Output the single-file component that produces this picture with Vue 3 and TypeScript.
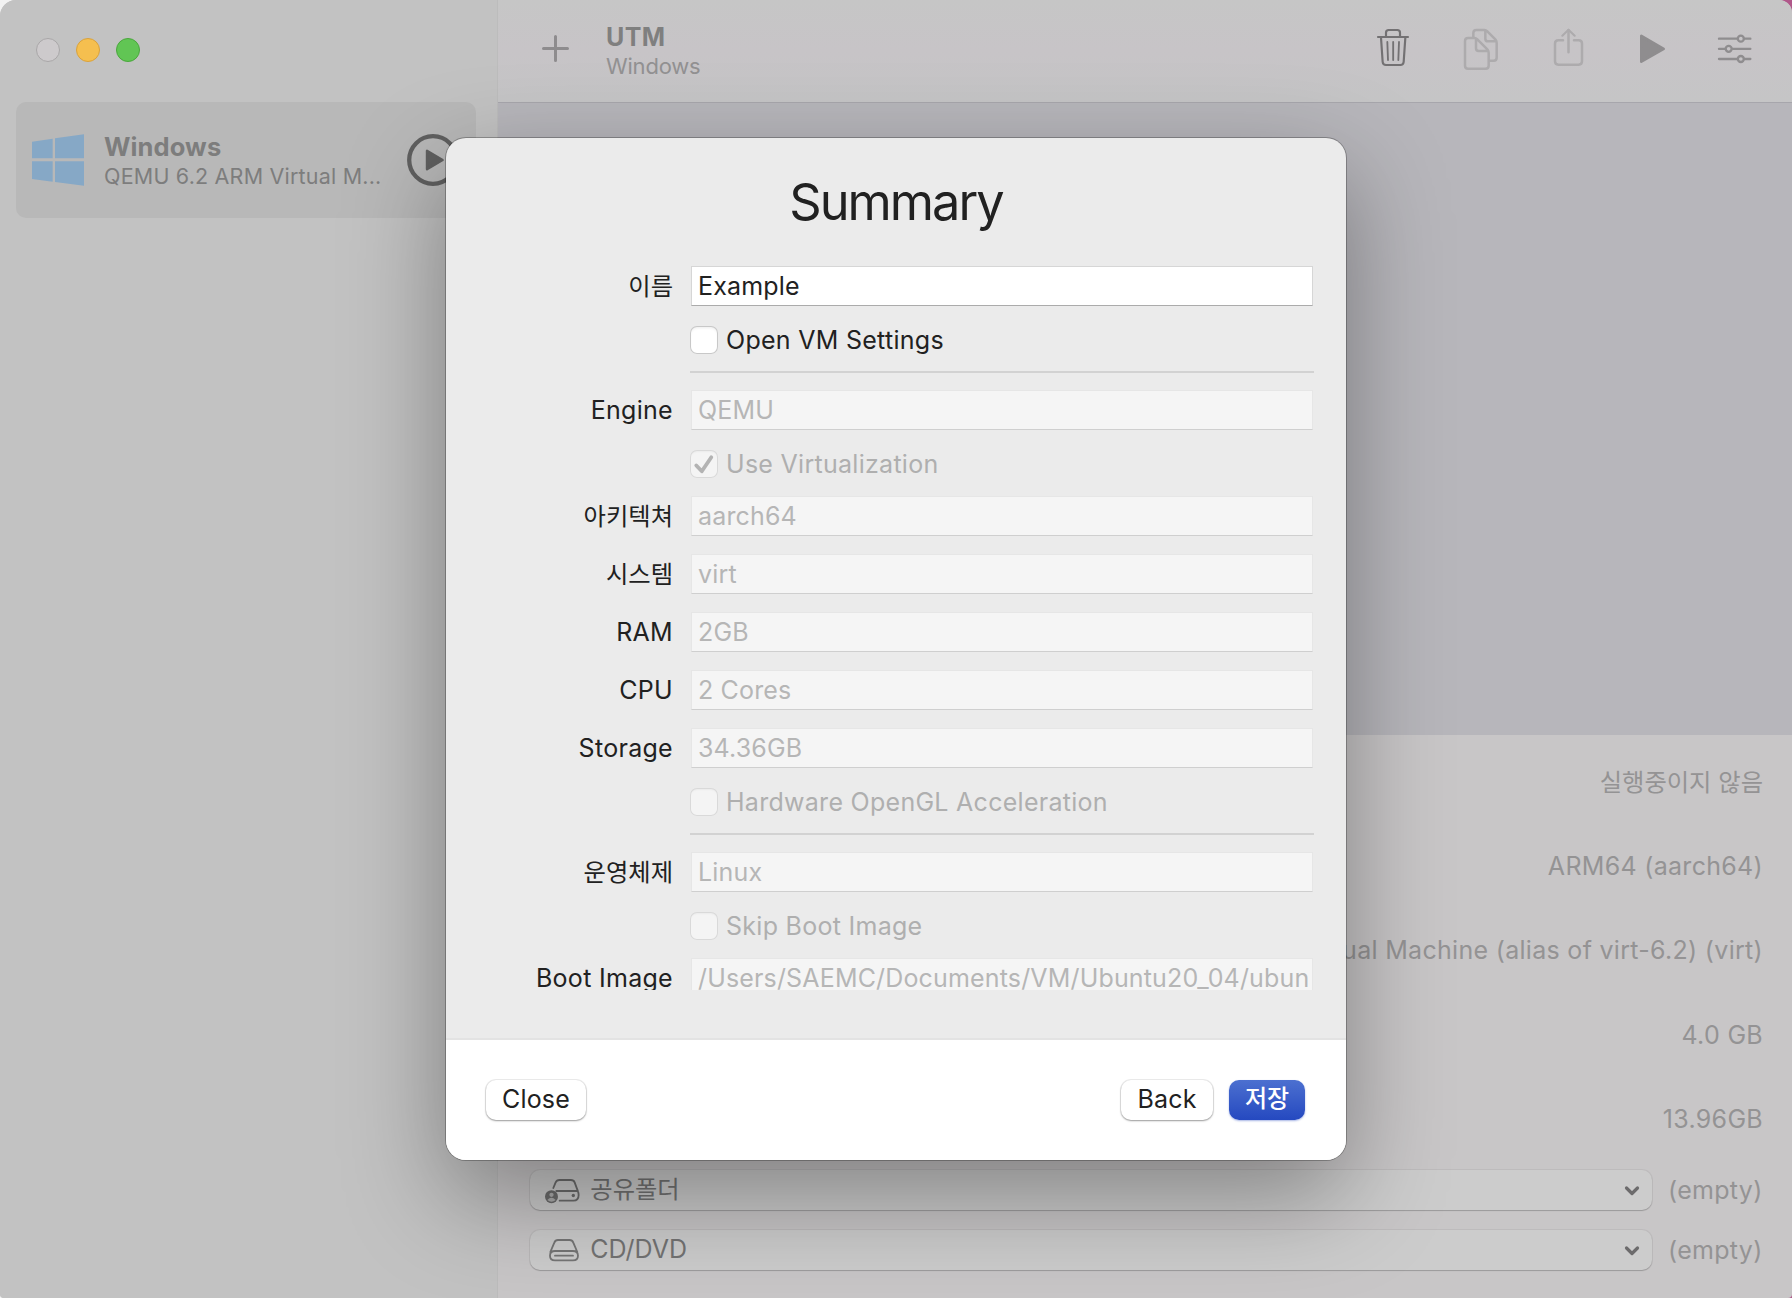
<script setup lang="ts">
interface Row {
  kind: 'field' | 'check' | 'divider'
  label?: string
  text?: string
  enabled?: boolean
  checked?: boolean
}

const rows: Row[] = [
  { kind: 'field', label: '이름', text: 'Example', enabled: true },
  { kind: 'check', text: 'Open VM Settings', enabled: true },
  { kind: 'divider' },
  { kind: 'field', label: 'Engine', text: 'QEMU' },
  { kind: 'check', text: 'Use Virtualization', checked: true },
  { kind: 'field', label: '아키텍쳐', text: 'aarch64' },
  { kind: 'field', label: '시스템', text: 'virt' },
  { kind: 'field', label: 'RAM', text: '2GB' },
  { kind: 'field', label: 'CPU', text: '2 Cores' },
  { kind: 'field', label: 'Storage', text: '34.36GB' },
  { kind: 'check', text: 'Hardware OpenGL Acceleration' },
  { kind: 'divider' },
  { kind: 'field', label: '운영체제', text: 'Linux' },
  { kind: 'check', text: 'Skip Boot Image' },
  { kind: 'field', label: 'Boot Image', text: '/Users/SAEMC/Documents/VM/Ubuntu20_04/ubun' },
]

const details: string[] = [
  '실행중이지 않음',
  'ARM64 (aarch64)',
  'QEMU 6.2 ARM Virtual Machine (alias of virt-6.2) (virt)',
  '4.0 GB',
  '13.96GB',
]

const isKorean = (s?: string): boolean => /[\uac00-\ud7a3]/.test(s ?? '')
</script>

<template>
  <div class="desktop">
    <div class="window">
      <aside class="sidebar">
        <div class="lights">
          <span class="light off"></span>
          <span class="light yellow"></span>
          <span class="light green"></span>
        </div>
        <div class="vm">
          <svg class="logo" viewBox="96 402 156 154" width="52" height="52">
            <path fill="#86a8c6" d="M96 424L158 415V474H96ZM165 414L252 402V474H165ZM96 483H158V544L96 536ZM165 483H252V556L165 545Z" />
          </svg>
          <div class="vm-text">
            <div class="vm-name">Windows</div>
            <div class="vm-sub">QEMU 6.2 ARM Virtual M...</div>
          </div>
          <svg class="vm-play" viewBox="0 0 54 54" width="54" height="54">
            <circle cx="27" cy="27" r="23.8" fill="none" stroke="#606060" stroke-width="4.3" />
            <path d="M21 17.8V36.2L36.6 27Z" fill="#606060" stroke="#606060" stroke-width="2.4" stroke-linejoin="round" />
          </svg>
        </div>
      </aside>

      <main class="main">
        <header class="toolbar">
          <svg class="plus" viewBox="0 0 27 27" width="27" height="27">
            <path d="M13.5 1.5V25.5M1.5 13.5H25.5" stroke="#8e8c8e" stroke-width="3" stroke-linecap="round" />
          </svg>
          <div class="heading">
            <div class="app">UTM</div>
            <div class="current">Windows</div>
          </div>
          <div class="tools">
            <svg viewBox="27 0 264 306" width="88" height="102" fill="none" stroke="#737173" stroke-width="6.500" stroke-linecap="round" stroke-linejoin="round">
              <path d="M114 111H204M138 109V98Q138 90 146 90H172Q180 90 180 98V109M123 113L128 186Q129 195 138 195H181Q190 195 191 186L196 113" />
              <path d="M142 126L144 180M159.500 126V180M177 126L175 180" stroke-width="5.500" />
            </svg>
            <svg viewBox="291 0 264 306" width="88" height="102" fill="none" stroke="#adabad" stroke-width="7.500" stroke-linecap="round" stroke-linejoin="round">
              <path d="M400 112V99Q400 90 409 90H433Q438 90 442 94L466 118Q470 122 470 128V173Q470 182 461 182H450M436 92V116Q436 124 444 124H468" />
              <path d="M384 114H403Q408 114 412 118L442 148Q446 152 446 158V197Q446 206 437 206H384Q375 206 375 197V123Q375 114 384 114ZM408 116V145Q408 153 416 153H445" />
            </svg>
            <svg viewBox="555 0 264 306" width="88" height="102" fill="none" stroke="#adabad" stroke-width="7.500" stroke-linecap="round" stroke-linejoin="round">
              <path d="M669 121H655Q645 121 645 131V184Q645 194 655 194H716Q726 194 726 184V131Q726 121 716 121H702M685.500 157V91" />
              <path d="M667 107L685.500 89L704 107" stroke-width="6.500" />
            </svg>
            <svg viewBox="819 0 240 306" width="80" height="102" fill="#8f8d8f" stroke="#8f8d8f" stroke-width="8" stroke-linejoin="round">
              <path d="M904 108V185L971 146.500Z" />
            </svg>
            <svg viewBox="1059 0 246 306" width="82" height="102" fill="none" stroke="#8f8d8f" stroke-width="7" stroke-linecap="round">
              <path d="M1137 116H1191M1214 116H1231M1137 146.500H1154M1178 146.500H1231M1137 177H1191M1214 177H1231" />
              <circle cx="1202.500" cy="116" r="9" />
              <circle cx="1166" cy="146.500" r="9" />
              <circle cx="1202.500" cy="177" r="9" />
            </svg>
          </div>
        </header>
        <div class="preview"></div>
        <section class="details">
          <div v-for="d in details" :key="d" class="detail" :class="{ korean: isKorean(d) }">{{ d }}</div>
          <div class="drive">
            <div class="select">
              <svg class="drive-icon" viewBox="312 470 112 84" width="37.300" height="28" fill="none" stroke="#6c6c6c" stroke-width="5.500" stroke-linecap="round" stroke-linejoin="round">
                <path d="M340 503L347 486Q350 479 358 479H393Q401 479 404 486L414 513Q416 518 416 524Q416 541 400 541H359M349 512H411" />
                <circle cx="400" cy="525.500" r="5" fill="#6c6c6c" stroke="none" />
                <circle cx="334.500" cy="529" r="19.500" fill="#6c6c6c" stroke="none" />
                <circle cx="334.500" cy="523.500" r="6.500" fill="#aeaeae" stroke="none" />
                <path d="M322 539Q334.500 526 347 539Q334.500 550 322 539Z" fill="#aeaeae" stroke="none" />
              </svg>
              <span class="ko">공유폴더</span>
              <svg class="chevron" viewBox="0 0 16 12" width="16" height="12"><path d="M2.500 3L8 8.500L13.500 3" fill="none" stroke="#6c6b6c" stroke-width="3.200" stroke-linecap="round" stroke-linejoin="round" /></svg>
            </div>
            <span class="empty">(empty)</span>
          </div>
          <div class="drive">
            <div class="select">
              <svg class="drive-icon" viewBox="312 650 112 84" width="37.300" height="28" fill="none" stroke="#757575" stroke-width="5.500" stroke-linecap="round" stroke-linejoin="round">
                <path d="M331 695L343 667Q346 659 354 659H389Q397 659 400 667L412 695M345 692H399Q414 692 414 706Q414 720 399 720H345Q330 720 330 706Q330 692 345 692ZM345 706H399" />
              </svg>
              <span>CD/DVD</span>
              <svg class="chevron" viewBox="0 0 16 12" width="16" height="12"><path d="M2.500 3L8 8.500L13.500 3" fill="none" stroke="#6c6b6c" stroke-width="3.200" stroke-linecap="round" stroke-linejoin="round" /></svg>
            </div>
            <span class="empty">(empty)</span>
          </div>
        </section>
      </main>
    </div>

    <div class="dialog">
      <div class="body">
        <h1>Summary</h1>
        <div class="form">
          <template v-for="(r, i) in rows" :key="i">
            <div v-if="r.kind === 'field'" class="row">
              <div class="label" :class="{ korean: isKorean(r.label) }">{{ r.label }}</div>
              <div class="field" :class="{ enabled: r.enabled }">{{ r.text }}</div>
            </div>
            <div v-else-if="r.kind === 'check'" class="check" :class="{ enabled: r.enabled }">
              <span class="box">
                <svg v-if="r.checked" viewBox="0 0 28 28" width="28" height="28"><path d="M6.300 15.500L11.800 21.300L21.300 7.300" fill="none" stroke="#b3b3b3" stroke-width="3.800" stroke-linecap="round" stroke-linejoin="round" /></svg>
              </span>
              <span class="check-text">{{ r.text }}</span>
            </div>
            <div v-else class="divider"></div>
          </template>
        </div>
      </div>
      <footer class="footer">
        <button class="btn close">Close</button>
        <button class="btn back">Back</button>
        <button class="btn save">저장</button>
      </footer>
    </div>
  </div>
</template>

<style>
body {
  margin: 0;
  overflow: hidden;
}
</style>

<style scoped>
.desktop {
  position: relative;
  width: 1792px;
  height: 1298px;
  overflow: hidden;
  background: linear-gradient(90deg, #f2f2f2 50%, #b0588a 50%);
  font-family: Inter, "Noto Sans CJK KR", sans-serif;
  font-size: 25px;
  color: #212121;
}
.window {
  display: flex;
  width: 1792px;
  height: 1298px;
  border-radius: 16px 13px 4px 4px;
  overflow: hidden;
  background: #c8c6c7;
}
.sidebar {
  box-sizing: border-box;
  width: 498px;
  background: #c2c2c2;
  border-right: 1px solid #bcbcbc;
}
.lights {
  display: flex;
  gap: 16px;
  height: 24px;
  padding: 38px 0 40px 36px;
}
.light {
  box-sizing: border-box;
  width: 24px;
  height: 24px;
  border-radius: 50%;
}
.off { background: #cdcacc; border: 1px solid #a9a7a8; }
.yellow { background: #f5bf4f; border: 1px solid #d9a23c; }
.green { background: #61c554; border: 1px solid #4aa73c; }
.vm {
  box-sizing: border-box;
  display: flex;
  width: 460px;
  height: 116px;
  margin-left: 16px;
  padding: 0 16px;
  align-items: center;
  border-radius: 10px;
  background: #b8b8b8;
}
.vm-text {
  width: 302px;
  margin: 2px 0 0 20px;
  color: #7d7d7d;
  white-space: nowrap;
}
.vm-name {
  font-weight: 700;
  line-height: 30px;
  font-size: 25.5px;
  letter-spacing: 0.1px;
}
.vm-sub {
  font-size: 21.5px;
  line-height: 28px;
  letter-spacing: 0.2px;
}
.vm-play {
  flex: none;
}
.main {
  width: 1294px;
}
.toolbar {
  display: flex;
  height: 102px;
  align-items: center;
  background: linear-gradient(#c6c6c6, #c7c4c7 50%, #c5c5c6);
}
.plus {
  margin: -5px 0 0 44px;
}
.heading {
  margin: 2px 0 0 37px;
}
.app {
  font-size: 25px;
  font-weight: 700;
  line-height: 29px;
  letter-spacing: 0.4px;
  color: #7f7f7f;
}
.current {
  font-size: 22px;
  line-height: 29px;
  letter-spacing: -0.2px;
  color: #929192;
}
.tools {
  display: flex;
  margin-left: auto;
  padding-right: 17px;
}
.preview {
  box-sizing: border-box;
  height: 633px;
  background: #b7b6bb;
  border-top: 1px solid #a7a6ac;
}
.details {
  padding-top: 5px;
}
.detail {
  height: 84.2px;
  line-height: 84.2px;
  padding-right: 29px;
  text-align: right;
  color: #949394;
  letter-spacing: 0.3px;
}
.detail.korean {
  font-size: 24.3px;
  letter-spacing: 0;
}
.drive {
  display: flex;
  height: 40px;
  margin: 9px 0 0 32px;
  align-items: center;
}
.drive + .drive {
  margin-top: 20px;
}
.select {
  box-sizing: border-box;
  display: flex;
  width: 1122px;
  height: 40px;
  padding: 0 12px 0 14px;
  line-height: 38px;
  border-radius: 10px;
  color: #737373;
  background: #cccccc;
  box-shadow: 0 0 0 1px rgba(0, 0, 0, 0.05), 0 1px 1px rgba(0, 0, 0, 0.18);
}
.drive-icon {
  margin: 7px 9px 0 0;
}
.chevron {
  margin: 15px 0 0 auto;
}
.ko {
  font-size: 24.3px;
}
.empty {
  margin-left: 16px;
  line-height: 44px;
  letter-spacing: 0.3px;
  color: #949394;
}
.dialog {
  position: absolute;
  left: 446px;
  top: 138px;
  width: 900px;
  height: 1022px;
  border-radius: 20px;
  background: #ebebeb;
  box-shadow: 0 0 0 1px rgba(0, 0, 0, 0.26), 0 36px 100px rgba(0, 0, 0, 0.36);
}
.body {
  height: 900px;
  border-bottom: 2px solid #e3e3e3;
}
h1 {
  margin: 0;
  padding-top: 32px;
  height: 96px;
  font-size: 50.5px;
  font-weight: 400;
  line-height: 64px;
  text-align: center;
  letter-spacing: -2px;
}
.form {
  height: 723px;
  padding-top: 1px;
  overflow: hidden;
}
.row {
  display: flex;
  height: 40px;
}
.row + .row {
  margin-top: 18px;
}
.check + .row {
  margin-top: 19px;
}
.divider + .row {
  margin-top: 18px;
}
.label {
  width: 227px;
  margin-right: 18px;
  text-align: right;
  line-height: 38px;
  letter-spacing: 0.3px;
  white-space: nowrap;
}
.label.korean {
  font-size: 24.3px;
  letter-spacing: 0;
}
.field {
  box-sizing: border-box;
  width: 622px;
  height: 40px;
  margin-top: -1px;
  padding-left: 6px;
  line-height: 38px;
  white-space: nowrap;
  overflow: hidden;
  letter-spacing: 0.16px;
  color: #b6b6b6;
  background: #f5f5f5;
  border: 1px solid #e6e6e6;
  border-bottom: 1px solid #cfcfcf;
}
.field.enabled {
  color: #212121;
  background: #ffffff;
  border-color: #d6d6d6 #d6d6d6 #ababab;
}
.check {
  display: flex;
  height: 28px;
  margin: 19px 0 0 244px;
  color: #afafaf;
}
.check.enabled {
  color: #212121;
}
.box {
  box-sizing: border-box;
  width: 28px;
  height: 28px;
  border-radius: 7px;
  background: #f4f4f4;
  box-shadow: inset 0 0 0 1px #d9d9d9, inset 0 2px 2px rgba(0, 0, 0, 0.04);
}
.enabled .box {
  background: #ffffff;
  box-shadow: inset 0 0 0 1px #c8c8c8, inset 0 2px 3px rgba(0, 0, 0, 0.08);
}
.check-text {
  margin-left: 8px;
  line-height: 29px;
  letter-spacing: 0.28px;
}
.divider {
  width: 624px;
  height: 2px;
  margin: 17px 0 0 244px;
  background: #d2d2d2;
}
.footer {
  box-sizing: border-box;
  display: flex;
  height: 120px;
  padding: 40px 41px 0 40px;
  background: #ffffff;
  border-radius: 0 0 20px 20px;
}
.btn {
  height: 40px;
  padding: 0 0 3px;
  border: 0;
  border-radius: 10px;
  font: inherit;
  line-height: 36px;
  color: #212121;
  background: #ffffff;
  box-shadow: 0 0 0 1px rgba(0, 0, 0, 0.07), 0 1px 2px rgba(0, 0, 0, 0.35);
}
.close {
  width: 100px;
  letter-spacing: 0.2px;
}
.back {
  width: 92px;
  margin-left: auto;
  letter-spacing: 0.2px;
}
.save {
  width: 76px;
  margin-left: 16px;
  font-size: 24px;
  font-weight: 500;
  color: #ffffff;
  background: linear-gradient(#4c70d0, #2549c0);
  box-shadow: 0 1px 2px rgba(37, 73, 192, 0.4);
}
</style>
